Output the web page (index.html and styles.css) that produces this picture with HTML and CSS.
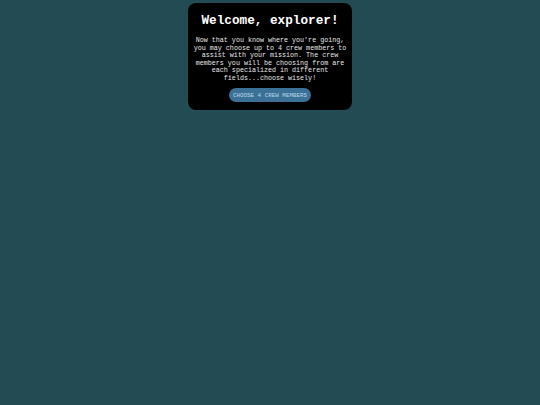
FILE: index.html
```html
<!DOCTYPE html>
<html lang="en">

<head>
  <meta charset="UTF-8">
  <meta name="viewport" content="width=device-width, initial-scale=1.0">
  <title>Crew Selection</title>
  <link rel="stylesheet" href="styles.css">
</head>

<body>
  <div class="container" id="intro-page">
    <h1>Welcome, explorer!</h1>
    <p>Now that you know where you're going, you may choose up to 4 crew members to assist with your mission. The crew
      members you will be choosing from are each specialized in different fields...choose wisely!</p>
    <button id="choose-btn">CHOOSE 4 CREW MEMBERS</button>
  </div>
</body>

</html>
```
FILE: styles.css
```css
body {
  font-family: 'Courier New', Courier, 'Liberation Mono', monospace;
  margin: 0;
  padding: 0;
  background: #234b53;
  color: #fff;
}

.container {
  background: #000;
  width: 164px;
  box-sizing: border-box;
  margin: 3px auto 0;
  padding: 10px 4px 8px;
  border-radius: 8px;
  text-align: center;
}

h1 {
  font-size: 12.7px;
  font-weight: bold;
  margin: 0 0 9px;
}

p {
  font-size: 6.7px;
  line-height: 7.5px;
  margin: 0 0 6px;
  color: #e8e8e8;
}

button {
  display: block;
  margin: 0 auto;
  font-family: inherit;
  font-size: 5.9px;
  color: #b8d6ea;
  background: #3b7197;
  border: none;
  border-radius: 8px;
  width: 82px;
  height: 14px;
  padding: 0;
  cursor: pointer;
}
```
